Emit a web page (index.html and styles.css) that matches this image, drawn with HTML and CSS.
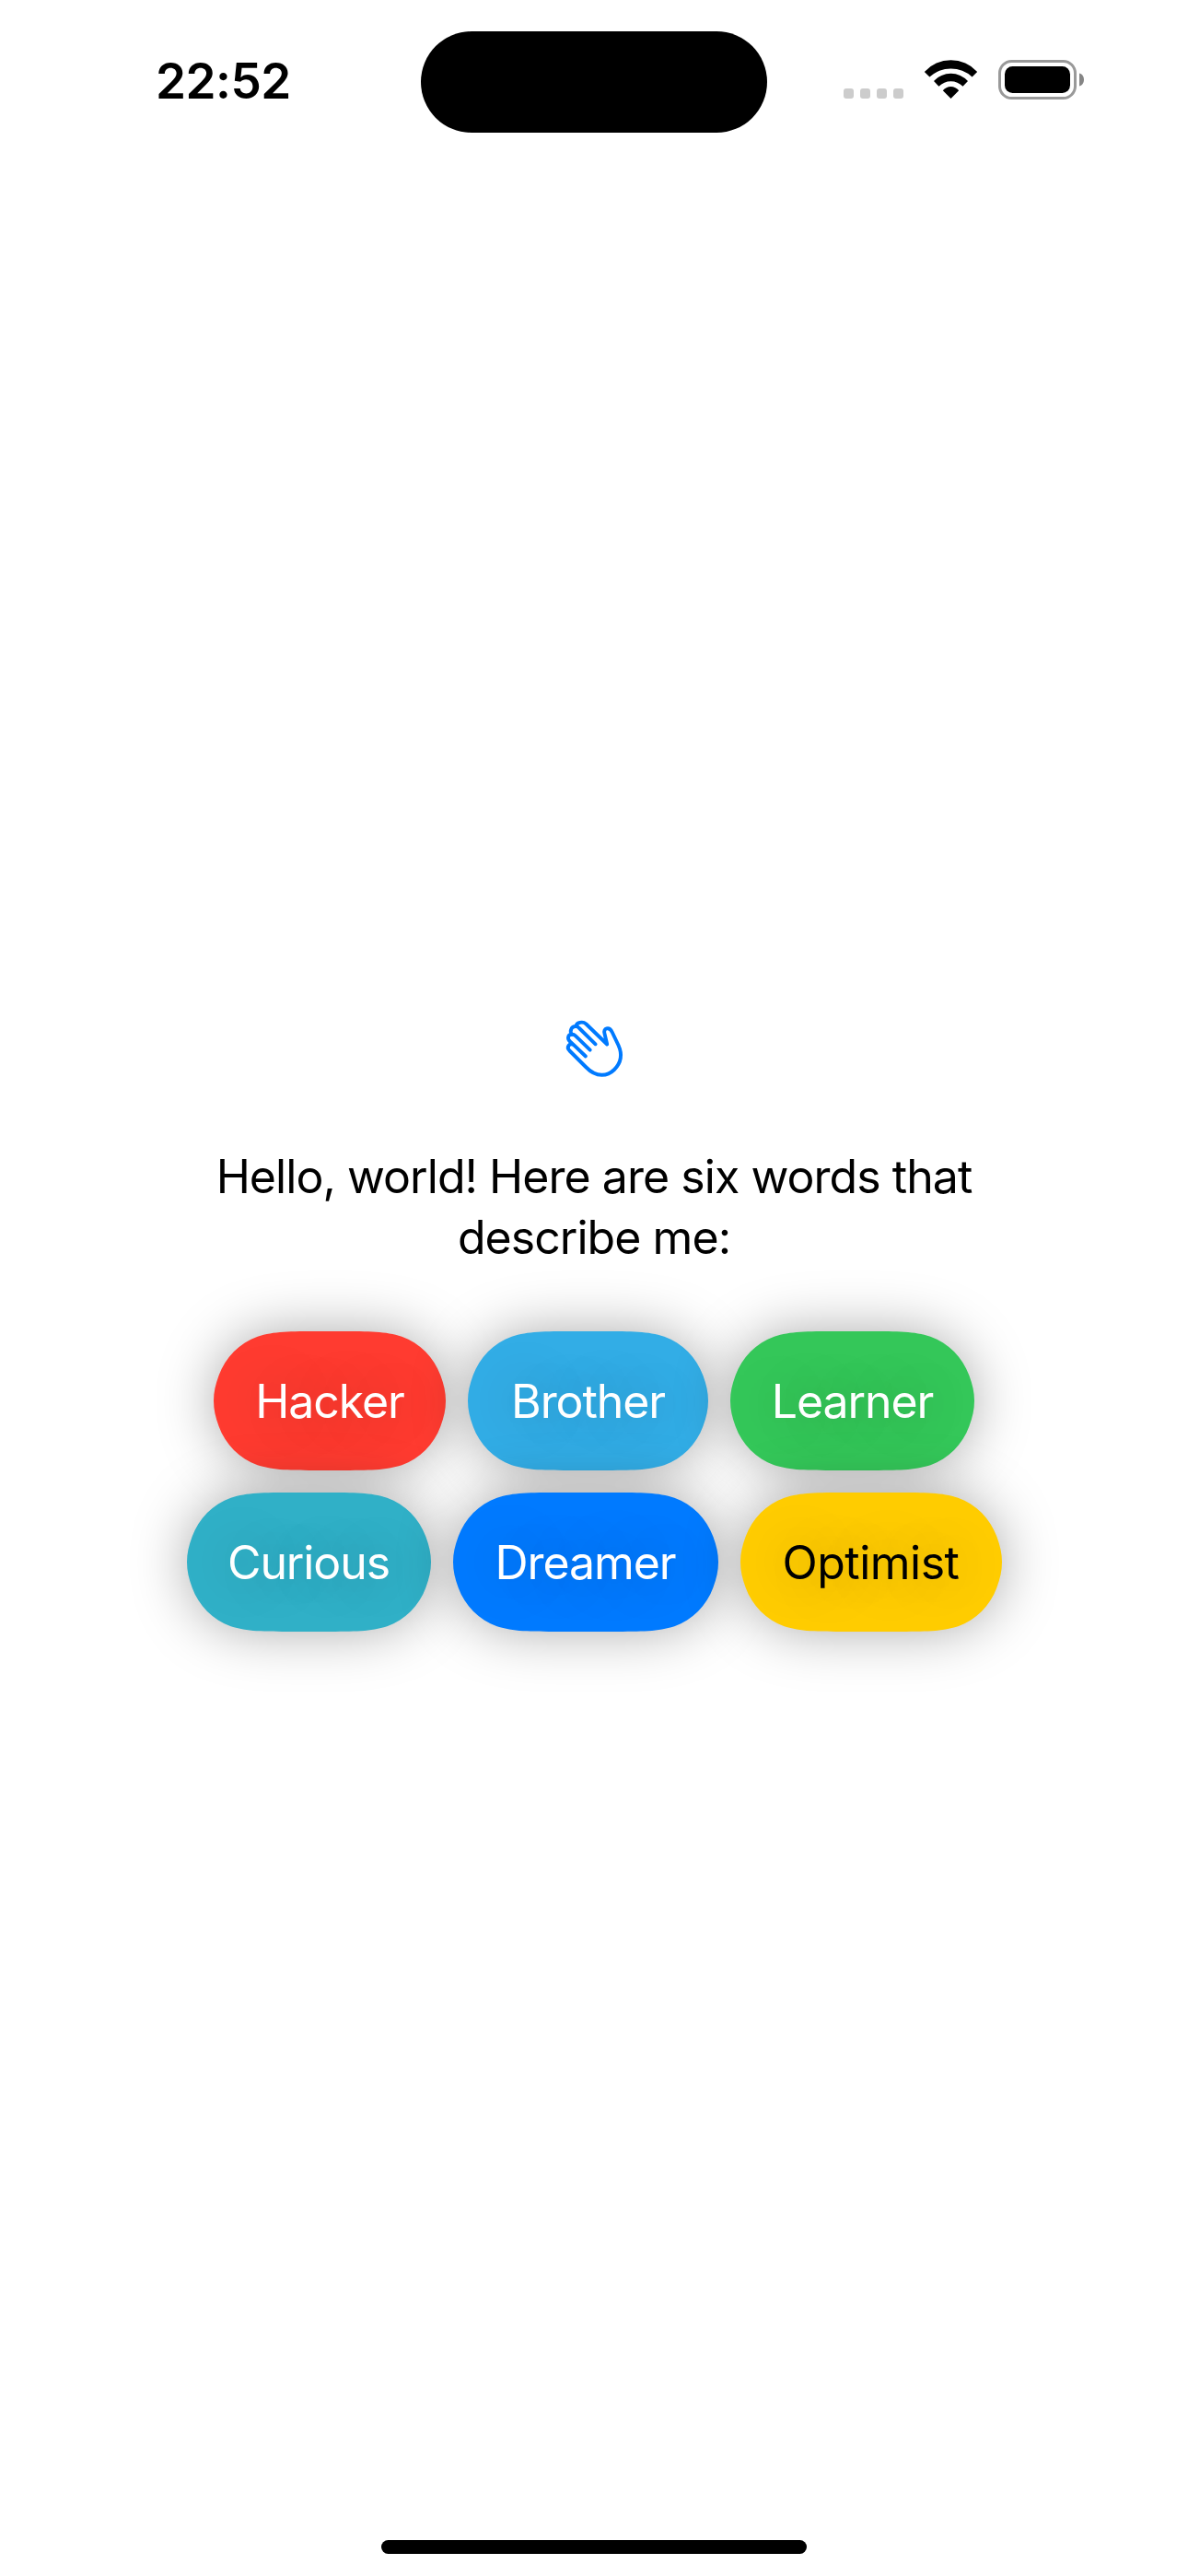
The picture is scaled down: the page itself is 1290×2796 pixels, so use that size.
FILE: index.html
```
<!DOCTYPE html>
<html lang="en">
<head>
<meta charset="utf-8">
<title>Six words</title>
<link rel="stylesheet" href="styles.css">
</head>
<body>
<div class="screen">
  <header class="status">
    <time class="clock">22:52</time>
    <div class="island"></div>
    <div class="indicators">
      <svg width="261" height="43" viewBox="0 0 261 43" aria-hidden="true">
        <g fill="#ccc">
          <rect x="0" y="31" width="11" height="11" rx="3"/>
          <rect x="18" y="31" width="11" height="11" rx="3"/>
          <rect x="36" y="31" width="11" height="11" rx="3"/>
          <rect x="54" y="31" width="11" height="11" rx="3"/>
        </g>
        <path d="M87.8 12.9A39 39 0 0 1 145.2 12.9L139.6 18.500A34.100 34.100 0 0 0 93.400 18.500ZM98 23.100A24.800 24.800 0 0 1 135 23.100L129.500 28.700A18.300 18.300 0 0 0 103.500 28.700ZM107.800 33.300A11 11 0 0 1 125.200 33.300L116.500 42Z"/>
        <rect x="169.5" y="1.5" width="82" height="40" rx="13" fill="none" stroke="#999" stroke-width="3"/>
        <rect x="175" y="7" width="71" height="29" rx="8.5"/>
        <path d="M256 14.5C259.5 15.500 261 18.500 261 21.500S259.500 27.500 256 28.500Z" fill="#858585"/>
      </svg>
    </div>
  </header>
  <main class="content">
    <svg class="hand" width="110" height="100" viewBox="0 0 110 100" aria-hidden="true">
      <g fill="none" stroke="#007aff" stroke-width="3.9" stroke-linecap="round" stroke-linejoin="round">
        <path d="M45.900 56.500L33 44.200C28.500 41.500 24.500 46.200 28.500 50.500L46 68C58 80.500 70 78 77 71C84 64 86 54.500 81.500 44.500L74.800 30.500C71.500 23.500 64.500 26 66.500 32L69.200 43.500L46.500 21.500C42.500 18 35.800 20 35.500 24C31 23.500 28 28.500 31 32.800C26.800 33 25.500 37 29 40.500L33 44.200"/>
        <path d="M31 32.800C32.500 32.300 33.500 33 35 34.400L50.700 49.700M35.500 24C36.800 24 37.800 24.700 39 26L56.600 43.300"/>
      </g>
    </svg>
    <p class="intro">Hello, world! Here are six words that<br>describe me:</p>
    <div class="words">
      <div class="row">
        <div class="pill hacker"><svg class="shape" width="252" height="151"><path d="M115.400 0H136.600c33.200 0 49.800 0 67.700 5.660c19.600 7.140 34.900 22.440 42.040 42.040c3.660 10 5.660 18.300 5.660 27.800c0 9.500-2 17.800-5.660 27.800c-7.140 19.600-22.440 34.900-42.040 42.040c-17.900 5.660-34.500 5.660-67.700 5.660H115.400c-33.200 0-49.800 0-67.700-5.660c-19.600-7.140-34.900-22.440-42.040-42.040c-3.660-10-5.660-18.300-5.660-27.800c0-9.500 2-17.800 5.660-27.800c7.140-19.600 22.440-34.900 42.040-42.040c17.900-5.660 34.500-5.660 67.700-5.660z"/></svg><span>Hacker</span></div>
        <div class="pill brother"><svg class="shape" width="261" height="151"><path d="M115.400 0H145.600c33.200 0 49.800 0 67.700 5.660c19.600 7.140 34.900 22.440 42.040 42.040c3.660 10 5.660 18.300 5.660 27.800c0 9.500-2 17.800-5.660 27.800c-7.140 19.600-22.440 34.900-42.040 42.040c-17.900 5.660-34.500 5.660-67.700 5.660H115.400c-33.200 0-49.800 0-67.700-5.660c-19.600-7.140-34.900-22.440-42.040-42.040c-3.660-10-5.660-18.300-5.660-27.800c0-9.500 2-17.800 5.660-27.800c7.140-19.600 22.440-34.900 42.040-42.040c17.900-5.660 34.500-5.660 67.700-5.660z"/></svg><span>Brother</span></div>
        <div class="pill learner"><svg class="shape" width="265" height="151"><path d="M115.400 0H149.600c33.200 0 49.800 0 67.700 5.660c19.600 7.140 34.900 22.440 42.040 42.040c3.660 10 5.660 18.300 5.660 27.800c0 9.500-2 17.800-5.660 27.800c-7.140 19.600-22.440 34.900-42.040 42.040c-17.900 5.660-34.500 5.660-67.700 5.660H115.400c-33.200 0-49.800 0-67.700-5.660c-19.600-7.140-34.900-22.440-42.040-42.040c-3.660-10-5.660-18.300-5.660-27.800c0-9.500 2-17.800 5.660-27.800c7.140-19.600 22.440-34.900 42.040-42.040c17.900-5.660 34.500-5.660 67.700-5.660z"/></svg><span>Learner</span></div>
      </div>
      <div class="row">
        <div class="pill curious"><svg class="shape" width="265" height="151"><path d="M115.400 0H149.600c33.200 0 49.800 0 67.700 5.660c19.600 7.140 34.900 22.440 42.040 42.040c3.660 10 5.660 18.300 5.660 27.800c0 9.500-2 17.800-5.660 27.800c-7.140 19.600-22.440 34.900-42.040 42.040c-17.900 5.660-34.500 5.660-67.700 5.660H115.400c-33.200 0-49.800 0-67.700-5.660c-19.600-7.140-34.900-22.440-42.040-42.040c-3.660-10-5.660-18.300-5.660-27.800c0-9.500 2-17.800 5.660-27.800c7.140-19.600 22.440-34.900 42.040-42.040c17.900-5.660 34.500-5.660 67.700-5.660z"/></svg><span>Curious</span></div>
        <div class="pill dreamer"><svg class="shape" width="288" height="151"><path d="M115.400 0H172.600c33.200 0 49.800 0 67.700 5.660c19.600 7.140 34.900 22.440 42.040 42.040c3.660 10 5.660 18.300 5.660 27.800c0 9.500-2 17.800-5.660 27.800c-7.140 19.600-22.440 34.900-42.040 42.040c-17.900 5.660-34.500 5.660-67.700 5.660H115.400c-33.200 0-49.800 0-67.700-5.660c-19.600-7.140-34.900-22.440-42.040-42.040c-3.660-10-5.660-18.300-5.660-27.800c0-9.500 2-17.800 5.660-27.800c7.140-19.600 22.440-34.900 42.040-42.040c17.900-5.660 34.500-5.660 67.700-5.660z"/></svg><span>Dreamer</span></div>
        <div class="pill optimist"><svg class="shape" width="284" height="151"><path d="M115.400 0H168.600c33.200 0 49.800 0 67.700 5.660c19.600 7.140 34.900 22.440 42.040 42.040c3.660 10 5.660 18.300 5.660 27.800c0 9.500-2 17.800-5.660 27.800c-7.140 19.600-22.440 34.900-42.040 42.040c-17.900 5.660-34.500 5.660-67.700 5.660H115.400c-33.200 0-49.800 0-67.700-5.660c-19.600-7.140-34.900-22.440-42.040-42.040c-3.660-10-5.660-18.300-5.660-27.800c0-9.500 2-17.800 5.660-27.800c7.140-19.600 22.440-34.900 42.040-42.040c17.900-5.660 34.500-5.660 67.700-5.660z"/></svg><span>Optimist</span></div>
      </div>
    </div>
  </main>
  <div class="home"></div>
</div>
</body>
</html>
```
FILE: styles.css
```
body {
  margin: 0;
  background: #fff;
  color: #000;
  font-family: Inter, "Liberation Sans", sans-serif;
}

.screen {
  display: flex;
  flex-direction: column;
  align-items: center;
  width: 1290px;
  height: 2796px;
  overflow: hidden;
}

.status {
  display: grid;
  grid-template-columns: 457px 376px 457px;
  width: 1290px;
  height: 144px;
  padding-top: 33px;
  box-sizing: border-box;
}

.clock {
  justify-self: start;
  padding: 23px 0 0 169px;
  font-size: 53px;
  font-weight: 600;
  line-height: 64px;
  letter-spacing: -0.5px;
}

.island {
  height: 110px;
  margin-top: 1px;
  border-radius: 55px;
  background: #000;
}

.indicators {
  padding: 32px 0 0 83px;
}

.indicators svg,
.hand {
  display: block;
}

.content {
  display: flex;
  flex-direction: column;
  align-items: center;
  margin-top: 946px;
}

.intro {
  margin: 54px 0 0;
  font-size: 50px;
  line-height: 66px;
  letter-spacing: -0.95px;
  text-align: center;
  white-space: nowrap;
}

.words {
  display: flex;
  flex-direction: column;
  align-items: center;
  gap: 24px;
  margin-top: 69px;
}

.row {
  display: flex;
  gap: 24px;
}

.pill {
  display: grid;
  place-items: center;
  height: 151px;
  color: #fff;
  font-size: 50px;
  line-height: 60px;
  letter-spacing: -1.1px;
}

.pill > * {
  grid-area: 1 / 1;
}

.pill span {
  position: relative;
  text-shadow: 0 0 60px rgba(0, 0, 0, 0.33);
}

.shape {
  display: block;
  overflow: visible;
  fill: currentColor;
  filter: drop-shadow(0 0 30px rgba(0, 0, 0, 0.33));
}

.hacker .shape { color: #ff3b30; }
.brother .shape { color: #32ade6; }
.learner .shape { color: #34c759; }
.curious .shape { color: #30b0c7; }
.dreamer .shape { color: #007aff; }
.optimist { color: #000; letter-spacing: -0.5px; }
.optimist .shape { color: #ffcc00; }

.home {
  width: 462px;
  height: 15px;
  margin: auto 0 24px;
  border-radius: 8px;
  background: #000;
}
```
